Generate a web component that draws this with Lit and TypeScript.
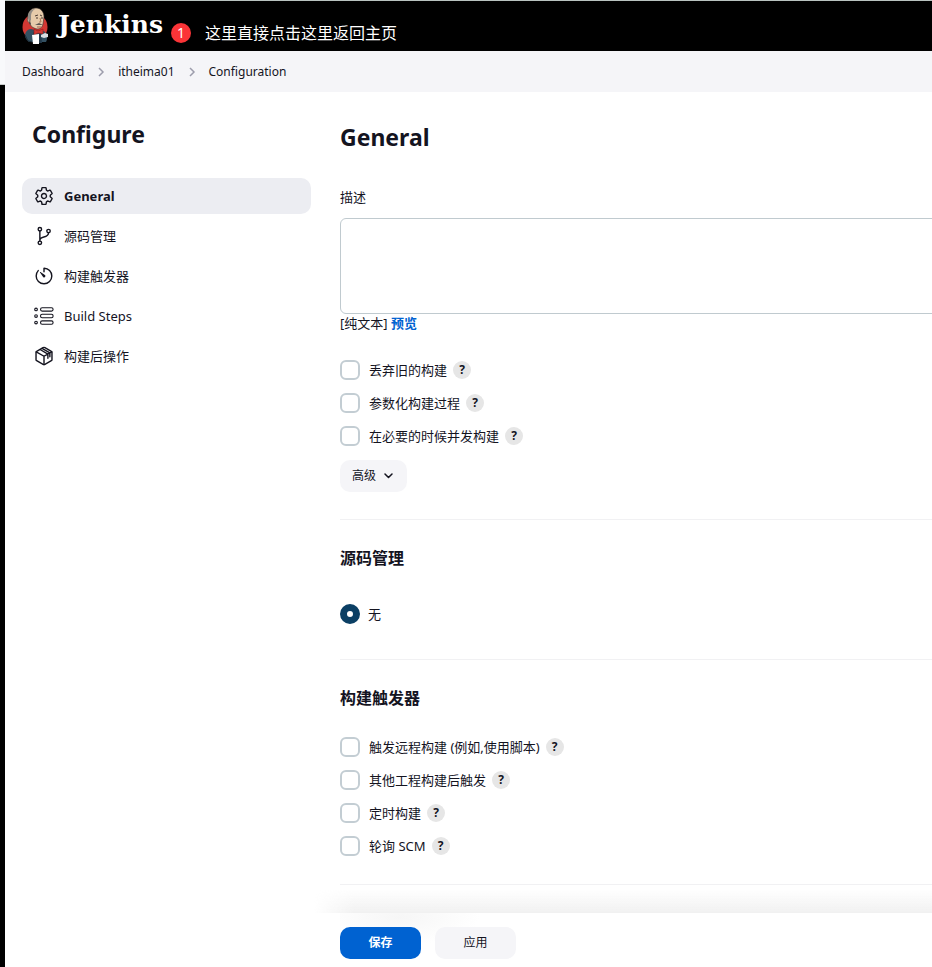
import { LitElement, html, svg, css } from "lit";
import { customElement, property } from "lit/decorators.js";

const GEAR = svg`<path d="M262.29 192.31a64 64 0 1057.4 57.4 64.13 64.13 0 00-57.4-57.4zM416.39 256a154.34 154.34 0 01-1.53 20.79l45.21 35.46a10.81 10.81 0 012.45 13.75l-42.77 74a10.81 10.81 0 01-13.14 4.59l-44.9-18.08a16.11 16.11 0 00-15.17 1.75A164.48 164.48 0 01325 400.8a15.94 15.94 0 00-8.82 12.14l-6.73 47.89a11.08 11.08 0 01-10.68 9.17h-85.54a11.11 11.11 0 01-10.69-8.87l-6.72-47.82a16.07 16.07 0 00-9-12.22 155.3 155.3 0 01-21.46-12.57 16 16 0 00-15.11-1.71l-44.89 18.07a10.81 10.81 0 01-13.14-4.58l-42.77-74a10.8 10.8 0 012.45-13.75l38.21-30a16.05 16.05 0 006-14.08c-.36-4.17-.58-8.33-.58-12.5s.21-8.27.58-12.35a16 16 0 00-6.07-13.94l-38.19-30A10.81 10.81 0 0149.48 186l42.77-74a10.81 10.81 0 0113.14-4.59l44.9 18.08a16.11 16.11 0 0015.17-1.75A164.48 164.48 0 01187 111.2a15.94 15.94 0 008.82-12.14l6.73-47.89A11.08 11.08 0 01213.23 42h85.54a11.11 11.11 0 0110.69 8.87l6.72 47.82a16.07 16.07 0 009 12.22 155.3 155.3 0 0121.46 12.57 16 16 0 0015.11 1.71l44.89-18.07a10.81 10.81 0 0113.14 4.58l42.77 74a10.8 10.8 0 01-2.45 13.75l-38.21 30a16.05 16.05 0 00-6.05 14.08c.33 4.14.55 8.3.55 12.47z"/>`;
const BRANCH = svg`<circle cx="150" cy="82" r="44"/><circle cx="150" cy="430" r="44"/><circle cx="372" cy="130" r="44"/><path d="M150 386V126M372 174c0 150-222 70-222 190"/>`;
const TIMER = svg`<path d="M108 118A198 198 0 0056 254c-1.18 110 88 202 200 202 110 0 200-90 200-200 0-108-87-197-195.500-200a4.360 4.360 0 00-4.500 4.370V150"/><path d="M233.380 278.630l-79-113a8.130 8.130 0 0111.320-11.320l113 79a32.500 32.500 0 01-37.250 53.260 33.210 33.210 0 01-8.070-7.940z" fill="currentColor" stroke="none"/>`;
const STEPS = svg`<g stroke-width="28"><circle cx="52" cy="88" r="34"/><circle cx="52" cy="256" r="34"/><circle cx="52" cy="424" r="34"/><rect x="168" y="44" width="320" height="88" rx="40"/><rect x="168" y="212" width="320" height="88" rx="40"/><rect x="168" y="380" width="320" height="88" rx="40"/></g>`;
const CUBE = svg`<path d="M460 349V163a32 32 0 00-16-28L280 42a48 48 0 00-48 0L68 135a32 32 0 00-16 28v186a32 32 0 0016 28l164 93a48 48 0 0048 0l164-93a32 32 0 0016-28z"/><path d="M58 148l198 114 198-114M256 474V262M156 90l200 116v110M206 62l200 114v100"/>`;

const NAV = [
  { label: "General", icon: GEAR, active: true },
  { label: "源码管理", icon: BRANCH },
  { label: "构建触发器", icon: TIMER },
  { label: "Build Steps", icon: STEPS },
  { label: "构建后操作", icon: CUBE },
];

@customElement("check-row")
export class CheckRow extends LitElement {
  @property() label = "";

  static styles = css`
    :host { display: flex; align-items: center; height: 20px; }
    .option { display: flex; align-items: center; gap: 9px; }
    .box {
      appearance: none; margin: 0; width: 20px; height: 20px;
      border: 2px solid #c3cdd3; border-radius: 6px; background: #fff;
    }
    .box:checked { background: #0b3f64; border-color: #0b3f64; }
    .help {
      width: 18px; height: 18px; margin-left: 6px; padding: 0; border: 0; border-radius: 50%;
      background: #e6e6e6; color: #14141f;
      font: bold 12px/18px "Noto Sans", sans-serif; text-align: center;
    }
  `;

  render() {
    return html`
      <label class="option"><input class="box" type="checkbox" />${this.label}</label>
      <button class="help" type="button" aria-label="帮助: ${this.label}">?</button>
    `;
  }
}

@customElement("app-root")
export class AppRoot extends LitElement {
  static styles = css`
    :host {
      display: grid; grid-template-columns: 5px minmax(0, 1fr); min-height: 100vh;
      background: #fff; color: #14141f;
      font: 13px/20px "Noto Sans", "Noto Sans CJK SC", sans-serif;
    }
    * { box-sizing: border-box; }
    .edge { background: linear-gradient(#f8f9fb 84px, #c8cccc 84px, #c8cccc 85px, #000 85px); }
    .page { display: flex; flex-direction: column; overflow: clip; border-top: 1px solid #b9c2bf; }
    a { color: inherit; text-decoration: none; }

    .header { display: flex; align-items: center; height: 50px; padding-left: 15px; background: #000; color: #fff; }
    .brand { display: flex; align-items: center; gap: 6px; height: 50px; }
    .butler { width: 32px; height: 38px; }
    .name { padding-bottom: 2px; font: bold 25px/32px "DejaVu Serif", serif; }
    .note { display: flex; align-items: center; gap: 14px; margin-left: 8px; padding-top: 14px; font-size: 16px; }
    .badge { width: 20px; height: 20px; border-radius: 50%; background: #fb3437; font-size: 14px; text-align: center; }

    .crumbs { display: flex; align-items: center; gap: 13px; height: 41px; padding-left: 17px; background: #f5f5f8; font-size: 12px; }
    .chevron { width: 8px; height: 12px; fill: none; stroke: #9d9dac; stroke-width: 1.5; }

    .body { display: grid; grid-template-columns: 289px minmax(0, 1fr); gap: 29px; flex: 1; padding-left: 17px; }
    h1, h2 { margin: 0; font-size: 23px; line-height: 32px; font-weight: 700; }
    h1 { padding: 26px 0 28px 10px; }
    .nav { display: flex; flex-direction: column; gap: 4px; }
    .item { display: flex; align-items: center; gap: 10px; height: 36px; padding-left: 12px; border-radius: 10px; }
    .active { background: #ecedf2; font-weight: 700; }
    .icon { width: 20px; height: 20px; fill: none; stroke: currentColor; stroke-width: 36; stroke-linecap: round; stroke-linejoin: round; }

    .main { display: flex; flex-direction: column; padding-top: 29px; }
    .field { display: flex; flex-direction: column; margin-top: 34px; }
    .text {
      width: calc(100% + 16px); height: 96px; margin-top: 11px; padding: 8px;
      border: 1px solid #c0cacf; border-radius: 6px; resize: none; font: inherit; color: inherit;
    }
    .markup { line-height: 18px; }
    .preview { color: #0062d1; font-weight: 700; }
    .options { display: flex; flex-direction: column; gap: 13px; }
    .general { margin-top: 28px; }
    button { border: 0; font: inherit; color: inherit; }
    .advanced {
      display: flex; align-items: center; align-self: flex-start; gap: 8px; height: 32px;
      margin-top: 14px; padding: 0 14px 0 12px; border-radius: 10px; background: #f5f5f8; font-size: 12px;
    }
    .down { width: 9px; height: 6px; fill: none; stroke: currentColor; stroke-width: 1.5; stroke-linecap: round; stroke-linejoin: round; }
    .section { margin-top: 27px; padding-top: 27px; border-top: 1px solid #f1f1f3; }
    h3 { margin: 0; font-size: 16px; line-height: 22px; font-weight: 700; }
    .radio { display: flex; align-items: center; gap: 8px; margin-top: 35px; padding-bottom: 8px; }
    .dot { appearance: none; margin: 0; width: 20px; height: 20px; border: 7px solid #0b3f64; border-radius: 50%; background: #fff; }
    .triggers { margin-top: 28px; }
    .end { height: 1px; margin: 28px 0; border: 0; background: #f1f1f3; }
    .footer {
      position: sticky; bottom: 0; display: flex; gap: 14px; padding: 14px 0 8px;
      background: radial-gradient(ellipse 80px 28px at 60px 4px, #f6f6f6, #fff);
    }
    .footer::before {
      content: ""; position: absolute; left: -26px; right: 0; bottom: 100%; height: 24px;
      background: linear-gradient(to top, #f1f1f1, rgba(241, 241, 241, 0));
      mask-image: linear-gradient(to right, transparent, #000 40px);
      pointer-events: none;
    }
    .action { width: 81px; height: 32px; border-radius: 10px; background: #f5f5f8; font-size: 12px; }
    .primary { background: #0062d1; color: #fff; font-weight: 700; }
  `;

  private butler() {
    return html`
      <svg class="butler" viewBox="0 0 32 38" aria-hidden="true">
        <ellipse cx="15" cy="20" rx="12.500" ry="13" fill="#d33833" />
        <path d="M6 25c2-3 5-4 8-2l6 2 4-1c3 3 4 8 2 11l-17 0c-4-3-5-7-3-10z" fill="#335061" />
        <path d="M13 25l3 4 5-4 1 11h-9z" fill="#23394a" />
        <path d="M8 10C8 4 12 1 16 1c5 0 8 4 8 9l-1 7c-1 4-3 5-6 5-4-1-7-3-7-6-3-1-3-4-2-6z" fill="#e6cbaa" stroke="#3a332f" stroke-width=".6" />
        <path d="M8 11c-1-5 3-9 7-9-3 2-4 4-4 7v4l-2 2z" fill="#8f8a84" />
        <path d="M10 13l1 5-2-2z" fill="#4c4744" />
        <path d="M15 9l3-1M20 8l2 1M16 11h2M21 11h2" stroke="#4a3b33" fill="none" />
        <path d="M20 11l1 4-2 0" stroke="#a87956" fill="none" />
        <path d="M15 18l4-2 4 2-3 0z" fill="#5e5854" />
        <path d="M17 20h4" stroke="#a7624e" />
        <path d="M14 22l4 2 5-2v5l-5-1-4 2z" fill="#d33833" stroke="#8c1d1b" stroke-width=".6" />
        <path d="M12 28l7-1 0 10h-6z" fill="#fff" />
        <path d="M21 28l4-2 3 1v3l-4 1-3-1z" fill="#d8dde0" />
        <path d="M5 28l3 6 4 1" stroke="#1b2b36" fill="none" />
      </svg>
    `;
  }

  private chevron() {
    return html`<svg class="chevron" viewBox="0 0 8 12" aria-hidden="true"><path d="M2 2l4 4-4 4" /></svg>`;
  }

  render() {
    return html`
      <div class="edge"></div>
      <div class="page">
        <header class="header">
          <a class="brand" href="#">${this.butler()}<span class="name">Jenkins</span></a>
          <div class="note"><span class="badge">1</span><span>这里直接点击这里返回主页</span></div>
        </header>
        <nav class="crumbs">
          <a href="#">Dashboard</a>${this.chevron()}<a href="#">itheima01</a>${this.chevron()}<a href="#">Configuration</a>
        </nav>
        <div class="body">
          <aside>
            <h1>Configure</h1>
            <nav class="nav">
              ${NAV.map(
                (n) => html`<a class="item ${n.active ? "active" : ""}" href="#">
                  <svg class="icon" viewBox="0 0 512 512" aria-hidden="true">${n.icon}</svg>${n.label}
                </a>`,
              )}
            </nav>
          </aside>
          <main class="main">
            <h2>General</h2>
            <div class="field">
              <label for="description">描述</label>
              <textarea class="text" id="description"></textarea>
              <div class="markup">[纯文本] <a class="preview" href="#">预览</a></div>
            </div>
            <div class="options general">
              <check-row label="丢弃旧的构建"></check-row>
              <check-row label="参数化构建过程"></check-row>
              <check-row label="在必要的时候并发构建"></check-row>
            </div>
            <button class="advanced" type="button">
              高级<svg class="down" viewBox="0 0 9 6" aria-hidden="true"><path d="M1 1l3.500 3.500L8 1" /></svg>
            </button>
            <section class="section">
              <h3>源码管理</h3>
              <label class="radio"><input class="dot" type="radio" name="scm" checked />无</label>
            </section>
            <section class="section">
              <h3>构建触发器</h3>
              <div class="options triggers">
                <check-row label="触发远程构建 (例如,使用脚本)"></check-row>
                <check-row label="其他工程构建后触发"></check-row>
                <check-row label="定时构建"></check-row>
                <check-row label="轮询 SCM"></check-row>
              </div>
            </section>
            <hr class="end" />
            <footer class="footer">
              <button class="action primary" type="button">保存</button>
              <button class="action" type="button">应用</button>
            </footer>
          </main>
        </div>
      </div>
    `;
  }
}
